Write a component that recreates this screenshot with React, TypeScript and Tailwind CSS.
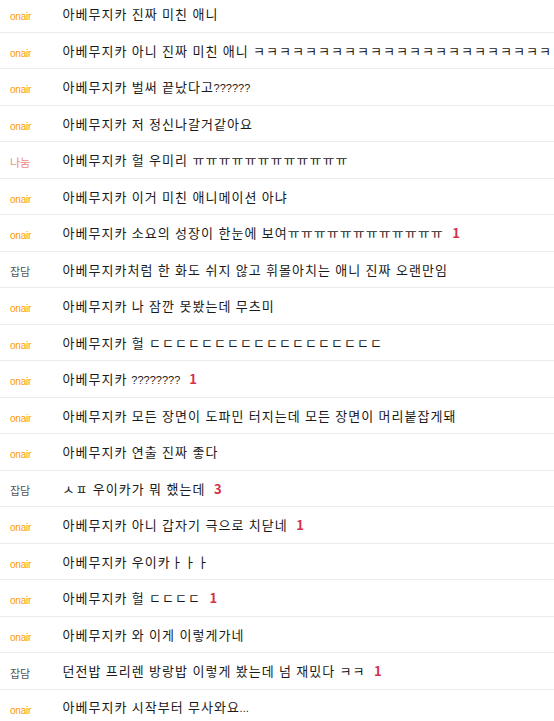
import React from "react";

type Row = { tag: string; text: string; count?: number };

const rows: Row[] = [
  { tag: "onair", text: "아베무지카 진짜 미친 애니" },
  { tag: "onair", text: "아베무지카 아니 진짜 미친 애니 ㅋㅋㅋㅋㅋㅋㅋㅋㅋㅋㅋㅋㅋㅋㅋㅋㅋㅋㅋㅋㅋㅋㅋ" },
  { tag: "onair", text: "아베무지카 벌써 끝났다고??????" },
  { tag: "onair", text: "아베무지카 저 정신나갈거같아요" },
  { tag: "나눔", text: "아베무지카 헐 우미리 ㅠㅠㅠㅠㅠㅠㅠㅠㅠㅠㅠㅠ" },
  { tag: "onair", text: "아베무지카 이거 미친 애니메이션 아냐" },
  { tag: "onair", text: "아베무지카 소요의 성장이 한눈에 보여ㅠㅠㅠㅠㅠㅠㅠㅠㅠㅠㅠㅠ", count: 1 },
  { tag: "잡담", text: "아베무지카처럼 한 화도 쉬지 않고 휘몰아치는 애니 진짜 오랜만임" },
  { tag: "onair", text: "아베무지카 나 잠깐 못봤는데 무츠미" },
  { tag: "onair", text: "아베무지카 헐 ㄷㄷㄷㄷㄷㄷㄷㄷㄷㄷㄷㄷㄷㄷㄷㄷㄷㄷ" },
  { tag: "onair", text: "아베무지카 ????????", count: 1 },
  { tag: "onair", text: "아베무지카 모든 장면이 도파민 터지는데 모든 장면이 머리붙잡게돼" },
  { tag: "onair", text: "아베무지카 연출 진짜 좋다" },
  { tag: "잡담", text: "ㅅㅍ 우이카가 뭐 했는데", count: 3 },
  { tag: "onair", text: "아베무지카 아니 갑자기 극으로 치닫네", count: 1 },
  { tag: "onair", text: "아베무지카 우이카ㅏㅏㅏ" },
  { tag: "onair", text: "아베무지카 헐 ㄷㄷㄷㄷ", count: 1 },
  { tag: "onair", text: "아베무지카 와 이게 이렇게가네" },
  { tag: "잡담", text: "던전밥 프리렌 방랑밥 이렇게 봤는데 넘 재밌다 ㅋㅋ", count: 1 },
  { tag: "onair", text: "아베무지카 시작부터 무사와요..." },
];

function isWide(ch: string) {
  const c = ch.charCodeAt(0);
  return (c >= 0x3131 && c <= 0x318e) || (c >= 0xac00 && c <= 0xd7a3);
}

function RichText({ text }: { text: string }) {
  const out: React.ReactNode[] = [];
  let k = 0;
  for (const ch of Array.from(text)) {
    if (isWide(ch)) {
      out.push(
        <span key={k++} className="inline-block w-[13px] text-center">
          {ch}
        </span>
      );
    } else if (ch === "?" || ch === ".") {
      out.push(
        <span
          key={k++}
          className="text-[11px]"
          style={{ fontFamily: '"Liberation Sans", Arial, sans-serif' }}
        >
          {ch}
        </span>
      );
    } else if (ch === " ") {
      out.push(<span key={k++} className="inline-block w-[4.3px]">{" "}</span>);
    } else {
      out.push(<span key={k++}>{ch}</span>);
    }
  }
  return <>{out}</>;
}

function Tag({ tag }: { tag: string }) {
  if (tag === "onair")
    return (
      <span
        className="text-[10px] text-[#ff9900] tracking-[-0.2px]"
        style={{ fontFamily: '"Liberation Sans", Arial, sans-serif' }}
      >
        onair
      </span>
    );
  if (tag === "나눔") return <span className="text-[11px] text-[#f08a80]">나눔</span>;
  return <span className="text-[11px] text-[#555]">잡담</span>;
}

export default function App() {
  return (
    <div
      className="w-[554px] h-[721px] overflow-hidden bg-white"
      style={{ fontFamily: '"Noto Sans CJK KR", "Noto Sans", sans-serif' }}
    >
      <div className="-mt-[4px]">
        {rows.map((r, i) => (
          <div
            key={i}
            className="flex items-center h-[36.5px] border-b border-[#ebebeb] whitespace-nowrap overflow-hidden"
          >
            <div className="w-[62px] shrink-0 pl-[10px] leading-none">
              <Tag tag={r.tag} />
            </div>
            <div className="text-[13px] text-[#1a1a1a] leading-none">
              <RichText text={r.text} />
              {r.count !== undefined && (
                <span className="ml-[9px] font-bold text-[13px] text-[#d5304c]">{r.count}</span>
              )}
            </div>
          </div>
        ))}
      </div>
    </div>
  );
}
